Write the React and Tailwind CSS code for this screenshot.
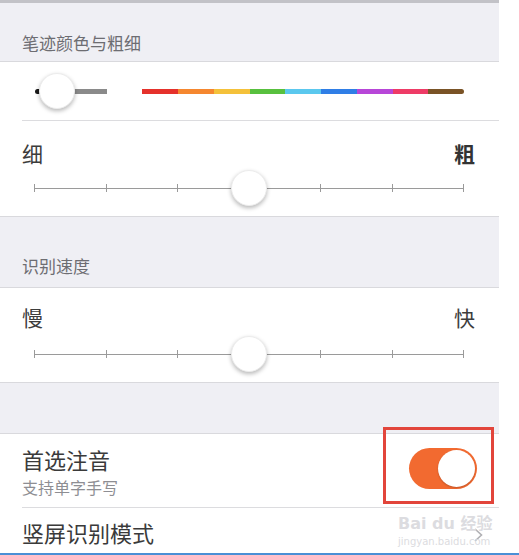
import React from "react";

const colors = [
  "#1a1a1a",
  "#8a8a8a",
  "#ffffff",
  "#e5312b",
  "#f5872f",
  "#f4c13a",
  "#58c03e",
  "#5bc8ee",
  "#2f7ee6",
  "#b746d8",
  "#ee3b66",
  "#7a5326",
];

const font = { fontFamily: '"Noto Sans CJK SC", "Noto Sans", sans-serif' };

function Knob({ className }) {
  return (
    <div
      className={
        "absolute w-[36px] h-[36px] rounded-full bg-white shadow-[0_2px_4px_rgba(0,0,0,0.28)] border border-[#ececec] " +
        className
      }
    />
  );
}

function TickSlider({ top }) {
  const ticks = [0, 1, 2, 3, 4, 5, 6];
  return (
    <div className="relative ml-[34px] w-[430px] h-[1px] bg-[#9a9a9a]" style={{ marginTop: top }}>
      {ticks.map((t) => (
        <div
          key={t}
          className="absolute top-[-4px] w-[1px] h-[8px] bg-[#9a9a9a]"
          style={{ left: `${(t * 429) / 6}px` }}
        />
      ))}
      <Knob className="left-[197px] top-[-18px]" />
    </div>
  );
}

function SectionHeader({ title, height, pb }) {
  return (
    <div
      className="flex items-end bg-[#efeff4] border-b border-[#d9d9dd] pl-[22px]"
      style={{ height, paddingBottom: pb }}
    >
      <span className="text-[17px] leading-[17px] text-[#6d6d72]">{title}</span>
    </div>
  );
}

export default function App() {
  return (
    <div className="w-[519px] h-[555px] bg-white overflow-hidden flex flex-col" style={font}>
      <div className="flex flex-1">
        <div className="w-[499px] flex flex-col">
          <div className="h-[3px] bg-[#c2c2c7]" />
          <SectionHeader title="笔迹颜色与粗细" height="59px" pb="10px" />

          {/* color bar */}
          <div className="h-[59px] bg-white flex flex-col">
            <div className="relative flex-1">
              <div className="absolute left-[35px] top-[27px] flex h-[5px] w-[429px] rounded-full overflow-hidden">
                {colors.map((c) => (
                  <div key={c} className="flex-1" style={{ backgroundColor: c }} />
                ))}
              </div>
              <Knob className="left-[39px] top-[11px]" />
            </div>
            <div className="ml-[22px] h-[1px] bg-[#dcdcdf]" />
          </div>

          {/* thickness */}
          <div className="h-[96px] bg-white border-b border-[#d9d9dd] flex flex-col">
            <div className="flex justify-between pl-[22px] pr-[24px] pt-[22px] text-[21px] leading-[21px] text-[#3c3c3c]">
              <span>细</span>
              <span className="font-bold text-[#333]">粗</span>
            </div>
            <TickSlider top="24px" />
          </div>

          <SectionHeader title="识别速度" height="71px" pb="13px" />

          {/* speed */}
          <div className="h-[95px] bg-white border-b border-[#d9d9dd] flex flex-col">
            <div className="flex justify-between pl-[22px] pr-[24px] pt-[19px] text-[21px] leading-[21px] text-[#3c3c3c]">
              <span>慢</span>
              <span>快</span>
            </div>
            <TickSlider top="26px" />
          </div>

          <div className="h-[51px] bg-[#efeff4] border-b border-[#d9d9dd]" />

          {/* toggle row */}
          <div className="relative h-[74px] bg-white flex flex-col">
            <div className="flex flex-1 items-center justify-between pl-[22px] pr-[22px]">
              <div className="flex flex-col">
                <span className="text-[22px] leading-[22px] text-[#3a3a3a] mt-[2px]">首选注音</span>
                <span className="text-[16px] leading-[16px] text-[#8e8e93] mt-[9px]">支持单字手写</span>
              </div>
              <div className="w-[68px] h-[41px] rounded-full bg-[#f26a30] flex items-center justify-end pr-[2px] mb-[4px]">
                <div className="w-[37px] h-[37px] rounded-full bg-white shadow-[0_1px_2px_rgba(0,0,0,0.2)]" />
              </div>
            </div>
            <div className="ml-[22px] h-[1px] bg-[#dcdcdf]" />
            <div className="absolute left-[383px] top-[-7px] w-[111px] h-[77px] border-[3px] border-[#e2453b]" />
          </div>

          {/* last row */}
          <div className="relative flex-1 bg-white flex items-center justify-between pl-[22px] pr-[16px]">
            <span className="text-[22px] leading-[22px] text-[#3a3a3a] mt-[2px]">竖屏识别模式</span>
            <svg width="9" height="14" viewBox="0 0 9 14" className="mt-[8px]">
              <polyline points="1,1 7.5,7 1,13" fill="none" stroke="#b0b0b4" strokeWidth="1.6" />
            </svg>
            <div
              className="absolute left-[398px] top-[6px] flex flex-col items-start whitespace-nowrap text-[#dcdce0]"
              style={{ fontFamily: '"DejaVu Sans", "Noto Sans CJK SC", sans-serif' }}
            >
              <span className="text-[16px] leading-[20px] font-bold">Bai du 经验</span>
              <span className="text-[10px] leading-[12px] mt-[2px]">jingyan.baidu.com</span>
            </div>
          </div>
        </div>
        <div className="flex-1 bg-white" />
      </div>
      <div className="h-[2px] bg-[#4a8fd6]" />
    </div>
  );
}
